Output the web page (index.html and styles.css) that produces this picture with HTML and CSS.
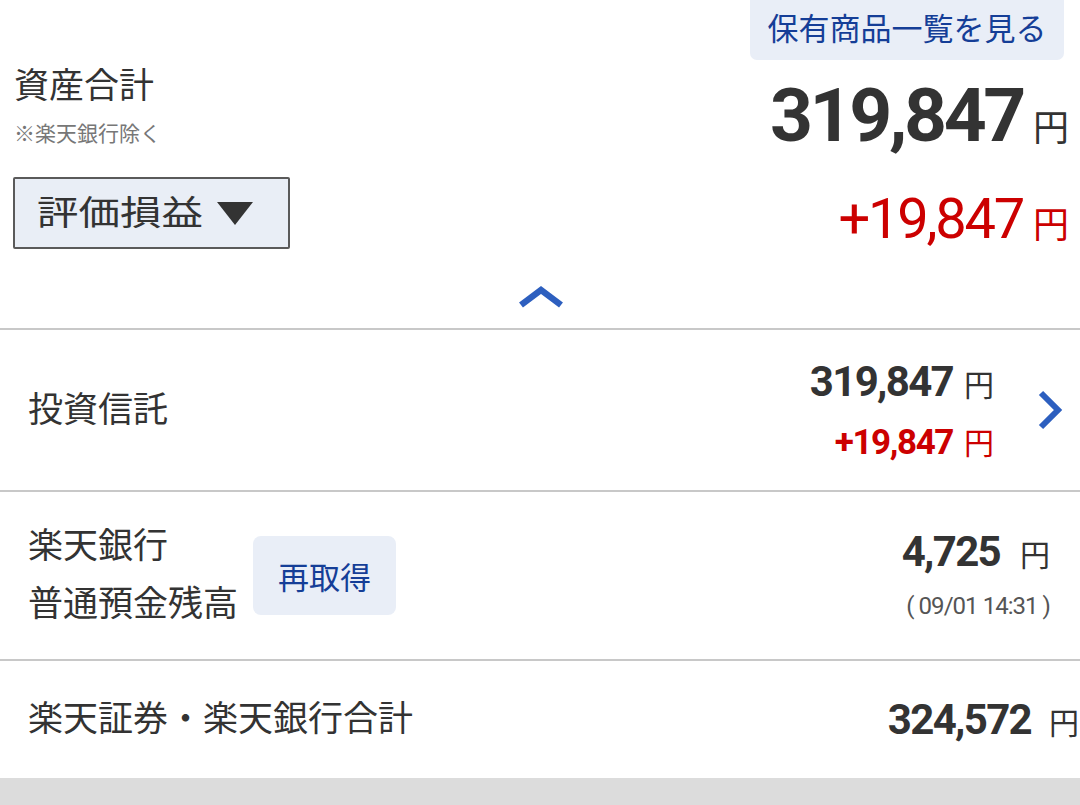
FILE: index.html
```html
<!DOCTYPE html>
<html lang="ja">
<head>
    <meta charset="UTF-8">
    <meta name="viewport" content="width=device-width, initial-scale=1.0">
    <title>資産合計</title>
    <link rel="stylesheet" href="styles.css">
</head>
<body>
    <section class="summary">
        <div class="summary-left">
            <h2 class="summary-title">資産合計</h2>
            <p class="summary-note">※楽天銀行除く</p>
            <button class="eval-select">
                <span class="eval-label">評価損益</span>
                <svg width="36" height="23" viewBox="0 0 36 23"><path d="M0 0H36L18 23Z" fill="#333"/></svg>
            </button>
        </div>
        <div class="summary-right">
            <a class="holdings-link">保有商品一覧を見る</a>
            <div class="total"><span class="total-num">319,847</span><span class="yen yen-big">円</span></div>
            <div class="gain"><span class="gain-num">+19,847</span><span class="yen yen-big">円</span></div>
        </div>
    </section>

    <div class="toggle">
        <svg width="44" height="24" viewBox="0 0 44 24"><polyline points="2,21 22,6 42,21" fill="none" stroke="#2d5fbf" stroke-width="6.5"/></svg>
    </div>

    <div class="row row-fund">
        <div class="row-label">投資信託</div>
        <div class="row-values">
            <div class="value-line"><span class="num">319,847</span><span class="yen">円</span></div>
            <div class="value-line plus"><span class="num num-sub">+19,847</span><span class="yen">円</span></div>
        </div>
        <svg class="row-arrow" width="26" height="40" viewBox="0 0 26 40"><polyline points="4,3 21,20 4,37" fill="none" stroke="#2d5fbf" stroke-width="6"/></svg>
    </div>

    <div class="row row-bank">
        <div class="row-label bank-label">楽天銀行<br>普通預金残高</div>
        <button class="refresh">再取得</button>
        <div class="row-values bank-values">
            <div class="value-line"><span class="num">4,725</span><span class="yen yen-wide">円</span></div>
            <div class="updated">( 09/01 14:31 )</div>
        </div>
    </div>

    <div class="row row-sum">
        <div class="row-label">楽天証券・楽天銀行合計</div>
        <div class="value-line sum-value"><span class="num">324,572</span><span class="yen yen-wide">円</span></div>
    </div>

    <div class="footer-bar"></div>
</body>
</html>
```

FILE: styles.css
```css
body {
    margin: 0;
    width: 1080px;
    height: 805px;
    overflow: hidden;
    background-color: white;
    color: #333;
    font-family: Roboto, "Noto Sans CJK JP", sans-serif;
}

/* Summary header */
.summary {
    display: flex;
    justify-content: space-between;
    padding: 0 11px 0 13px;
}

.summary-left {
    padding-top: 62px;
}

.summary-title {
    margin: 0 0 0 1px;
    font-size: 35px;
    font-weight: normal;
    line-height: 49px;
}

.summary-note {
    margin: 9px 0 0 1px;
    font-size: 21px;
    line-height: 29px;
    color: #777;
}

.eval-select {
    display: flex;
    align-items: center;
    margin-top: 28px;
    width: 277px;
    height: 72px;
    padding: 0 0 0 22px;
    background-color: #e9eef6;
    border: 2px solid #5a5a5a;
    border-radius: 2px;
    color: #333;
    font-family: inherit;
}

.eval-label {
    display: inline-block;
    font-size: 34px;
    line-height: 1;
    transform: scaleX(1.22);
    transform-origin: left center;
    margin-right: 44px;
}

.summary-right {
    display: flex;
    flex-direction: column;
    align-items: flex-end;
}

.holdings-link {
    display: flex;
    align-items: center;
    justify-content: center;
    margin: -8px 5px 0 0;
    width: 314px;
    height: 68px;
    background-color: #e9eef7;
    border-radius: 0 0 7px 7px;
    color: #153e97;
    font-size: 31px;
}

.total {
    margin-top: 18px;
    line-height: 1;
}

.total-num {
    font-size: 75px;
    font-weight: bold;
    letter-spacing: -0.045em;
}

.gain {
    margin-top: 38px;
    line-height: 1;
    color: #cc0000;
}

.gain-num {
    font-size: 56px;
    letter-spacing: -0.04em;
}

.yen {
    margin-left: 11px;
    font-size: 30px;
}

.yen-big {
    margin-left: 10px;
    font-size: 36px;
}

.yen-wide {
    margin-left: 20px;
}

.toggle {
    display: flex;
    justify-content: center;
    padding: 35px 0 20px;
}

.toggle svg {
    margin-left: 2px;
}

/* List rows */
.row {
    display: flex;
    align-items: center;
    border-top: 2px solid #c8c8c8;
    padding-left: 28px;
}

.row-label {
    font-size: 35px;
    line-height: 49px;
}

.row-fund {
    height: 160px;
    padding-right: 17px;
}

.row-values {
    display: flex;
    flex-direction: column;
    align-items: flex-end;
    margin-left: auto;
}

.value-line {
    line-height: 1;
}

.num {
    font-size: 42px;
    font-weight: bold;
    letter-spacing: -0.04em;
}

.num-sub {
    font-size: 35px;
}

.plus {
    margin-top: 22px;
    color: #cc0000;
}

.row-arrow {
    margin-left: 43px;
}

.row-bank {
    height: 167px;
    padding-right: 30px;
}

.bank-label {
    line-height: 58px;
}

.refresh {
    margin-left: 15px;
    width: 143px;
    height: 79px;
    background-color: #e9eef7;
    border: none;
    border-radius: 8px;
    color: #153e97;
    font-family: inherit;
    font-size: 31px;
}

.updated {
    margin-top: 19px;
    font-size: 24px;
    letter-spacing: -0.04em;
    color: #555;
}

.row-sum {
    height: 117px;
    padding-right: 1px;
}

.sum-value {
    margin-left: auto;
    white-space: nowrap;
}

.sum-value .yen-wide {
    margin-left: 18px;
}

.footer-bar {
    height: 27px;
    background-color: #dcdcdc;
}
```
